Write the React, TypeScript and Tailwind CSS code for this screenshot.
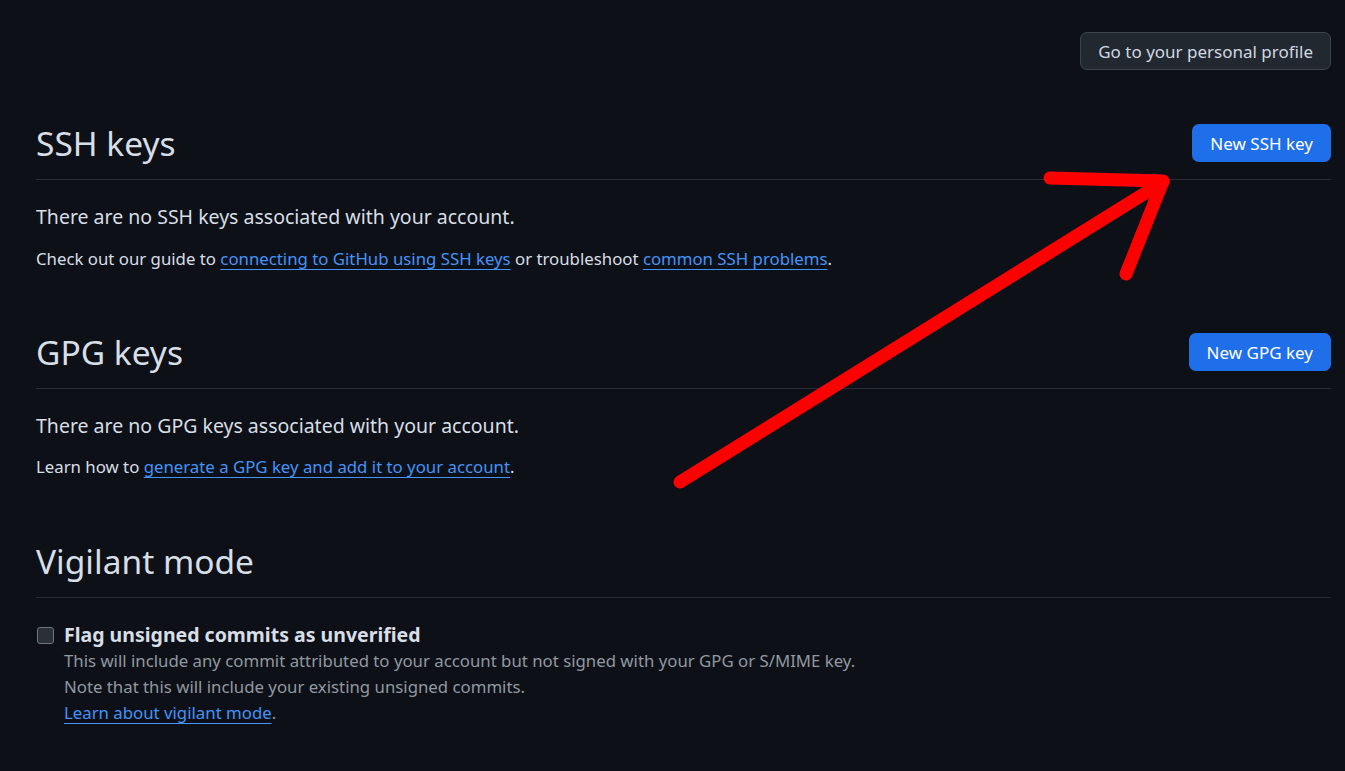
import React from "react";

const font = { fontFamily: '"Noto Sans", "Open Sans", sans-serif' };

function Subhead({ title, button }: { title: string; button?: string }) {
  return (
    <div className="flex items-center justify-between border-b border-[#262c36] pb-[17px]">
      <h2 className="text-[33.5px] leading-[38px] font-normal text-[#d8dee6]">{title}</h2>
      {button ? (
        <button className="h-[38px] px-[18px] rounded-[7px] bg-[#1f6feb] text-white text-[17px] leading-none">
          {button}
        </button>
      ) : (
        <div className="h-[38px]" />
      )}
    </div>
  );
}

function Link({ children }: { children: React.ReactNode }) {
  return <a className="text-[#4493f8] underline underline-offset-[4px] decoration-[1px]">{children}</a>;
}

export default function App() {
  return (
    <div style={font} className="relative min-h-[771px] w-full bg-[#0d1117] pl-[36px] pr-[14px] pt-[32px] overflow-hidden">
      <div className="flex justify-end">
        <button className="h-[38px] px-[17px] rounded-[7px] bg-[#212830] border border-[#3d444d] text-[#d1d7e0] text-[17px] leading-none">
          Go to your personal profile
        </button>
      </div>

      <section className="mt-[54px]">
        <Subhead title="SSH keys" button="New SSH key" />
        <p className="mt-[23px] text-[19.5px] leading-[28px] text-[#d8dee6]">
          There are no SSH keys associated with your account.
        </p>
        <p className="mt-[15px] text-[16.8px] leading-[26px] text-[#d8dee6]">
          Check out our guide to <Link>connecting to GitHub using SSH keys</Link> or troubleshoot{" "}
          <Link>common SSH problems</Link>.
        </p>
      </section>

      <section className="mt-[61px]">
        <Subhead title="GPG keys" button="New GPG key" />
        <p className="mt-[23px] text-[19.5px] leading-[28px] text-[#d8dee6]">
          There are no GPG keys associated with your account.
        </p>
        <p className="mt-[14px] text-[16.8px] leading-[26px] text-[#d8dee6]">
          Learn how to <Link>generate a GPG key and add it to your account</Link>.
        </p>
      </section>

      <section className="mt-[62px]">
        <Subhead title="Vigilant mode" />
        <div className="mt-[24px] flex items-start">
          <div className="mt-[5px] ml-[1px] w-[17px] h-[17px] rounded-[3px] border border-[#6e7681] bg-[#2a2f38] shrink-0" />
          <div className="ml-[10px]">
            <div className="text-[19.5px] leading-[26px] font-bold text-[#d8dee6]">Flag unsigned commits as unverified</div>
            <div className="text-[16.8px] leading-[26px] text-[#9198a1]">
              This will include any commit attributed to your account but not signed with your GPG or S/MIME key.
            </div>
            <div className="text-[16.8px] leading-[26px] text-[#9198a1]">
              Note that this will include your existing unsigned commits.
            </div>
            <div className="text-[16.8px] leading-[25px] text-[#9198a1]">
              <Link>Learn about vigilant mode</Link>.
            </div>
          </div>
        </div>
      </section>

      <svg className="absolute left-0 top-0 pointer-events-none" width="1345" height="771" viewBox="0 0 1345 771">
        <g stroke="#ff0000" strokeWidth="13" strokeLinecap="round" strokeLinejoin="round" fill="none">
          <path d="M680 482 L1163 182" />
          <path d="M1050 178 L1163 181 L1126 274" />
        </g>
      </svg>
    </div>
  );
}
